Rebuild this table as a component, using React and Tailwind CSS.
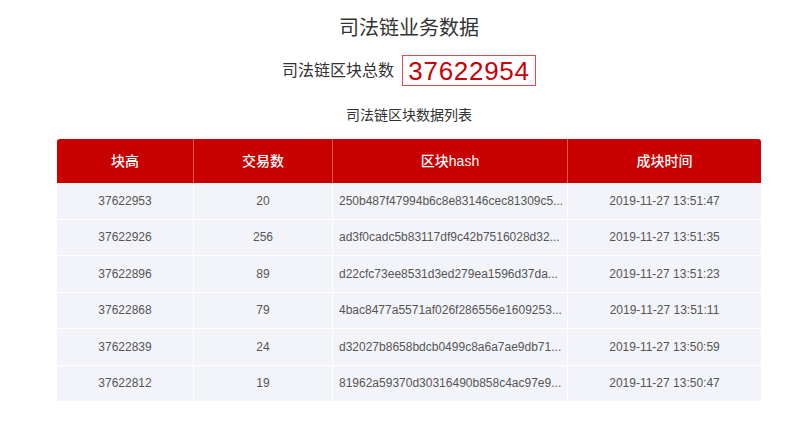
import React from "react";

const rows = [
  ["37622953", "20", "250b487f47994b6c8e83146cec81309c5...", "2019-11-27 13:51:47"],
  ["37622926", "256", "ad3f0cadc5b83117df9c42b7516028d32...", "2019-11-27 13:51:35"],
  ["37622896", "89", "d22cfc73ee8531d3ed279ea1596d37da...", "2019-11-27 13:51:23"],
  ["37622868", "79", "4bac8477a5571af026f286556e1609253...", "2019-11-27 13:51:11"],
  ["37622839", "24", "d32027b8658bdcb0499c8a6a7ae9db71...", "2019-11-27 13:50:59"],
  ["37622812", "19", "81962a59370d30316490b858c4ac97e9...", "2019-11-27 13:50:47"],
];

const font = { fontFamily: '"Liberation Sans", "Noto Sans CJK SC", sans-serif' };

export default function App() {
  return (
    <div className="w-[800px] h-[423px] bg-white flex flex-col items-center pl-[18px]" style={font}>
      <h1 className="mt-[14px] h-[28px] leading-[28px] text-[20px] text-[#333]">司法链业务数据</h1>
      <div className="mt-[13px] flex items-center h-[31px]">
        <span className="text-[16px] text-[#333] mr-[8px]">司法链区块总数</span>
        <span className="h-[31px] w-[134px] border border-[#e34a4a] flex items-center justify-center text-[26px] leading-none text-[#c8000a] tracking-[0.7px]">
          37622954
        </span>
      </div>
      <div className="mt-[19px] h-[20px] leading-[20px] text-[14px] text-[#333]">司法链区块数据列表</div>
      <div className="mt-[14px] w-[704px]">
        <div className="grid grid-cols-[137px_139px_235px_193px] h-[44px] bg-[#c80000] rounded-t-[3px] text-white text-[14px] font-medium">
          <div className="flex items-center justify-center border-r border-[#e25a5a]">块高</div>
          <div className="flex items-center justify-center border-r border-[#e25a5a]">交易数</div>
          <div className="flex items-center justify-center border-r border-[#e25a5a]">区块hash</div>
          <div className="flex items-center justify-center">成块时间</div>
        </div>
        {rows.map((r, i) => (
          <div
            key={i}
            className="grid grid-cols-[137px_139px_235px_193px] h-[36.5px] border-b border-white text-[12px] text-[#555]"
          >
            <div className="flex items-center justify-center bg-[#f3f4f9] border-r border-white">{r[0]}</div>
            <div className="flex items-center justify-center bg-[#f3f4f9] border-r border-white">{r[1]}</div>
            <div className="flex items-center pl-[6px] bg-[#f3f4f9] border-r border-white whitespace-nowrap overflow-hidden">{r[2]}</div>
            <div className="flex items-center justify-center bg-[#f3f4f9]">{r[3]}</div>
          </div>
        ))}
      </div>
    </div>
  );
}
